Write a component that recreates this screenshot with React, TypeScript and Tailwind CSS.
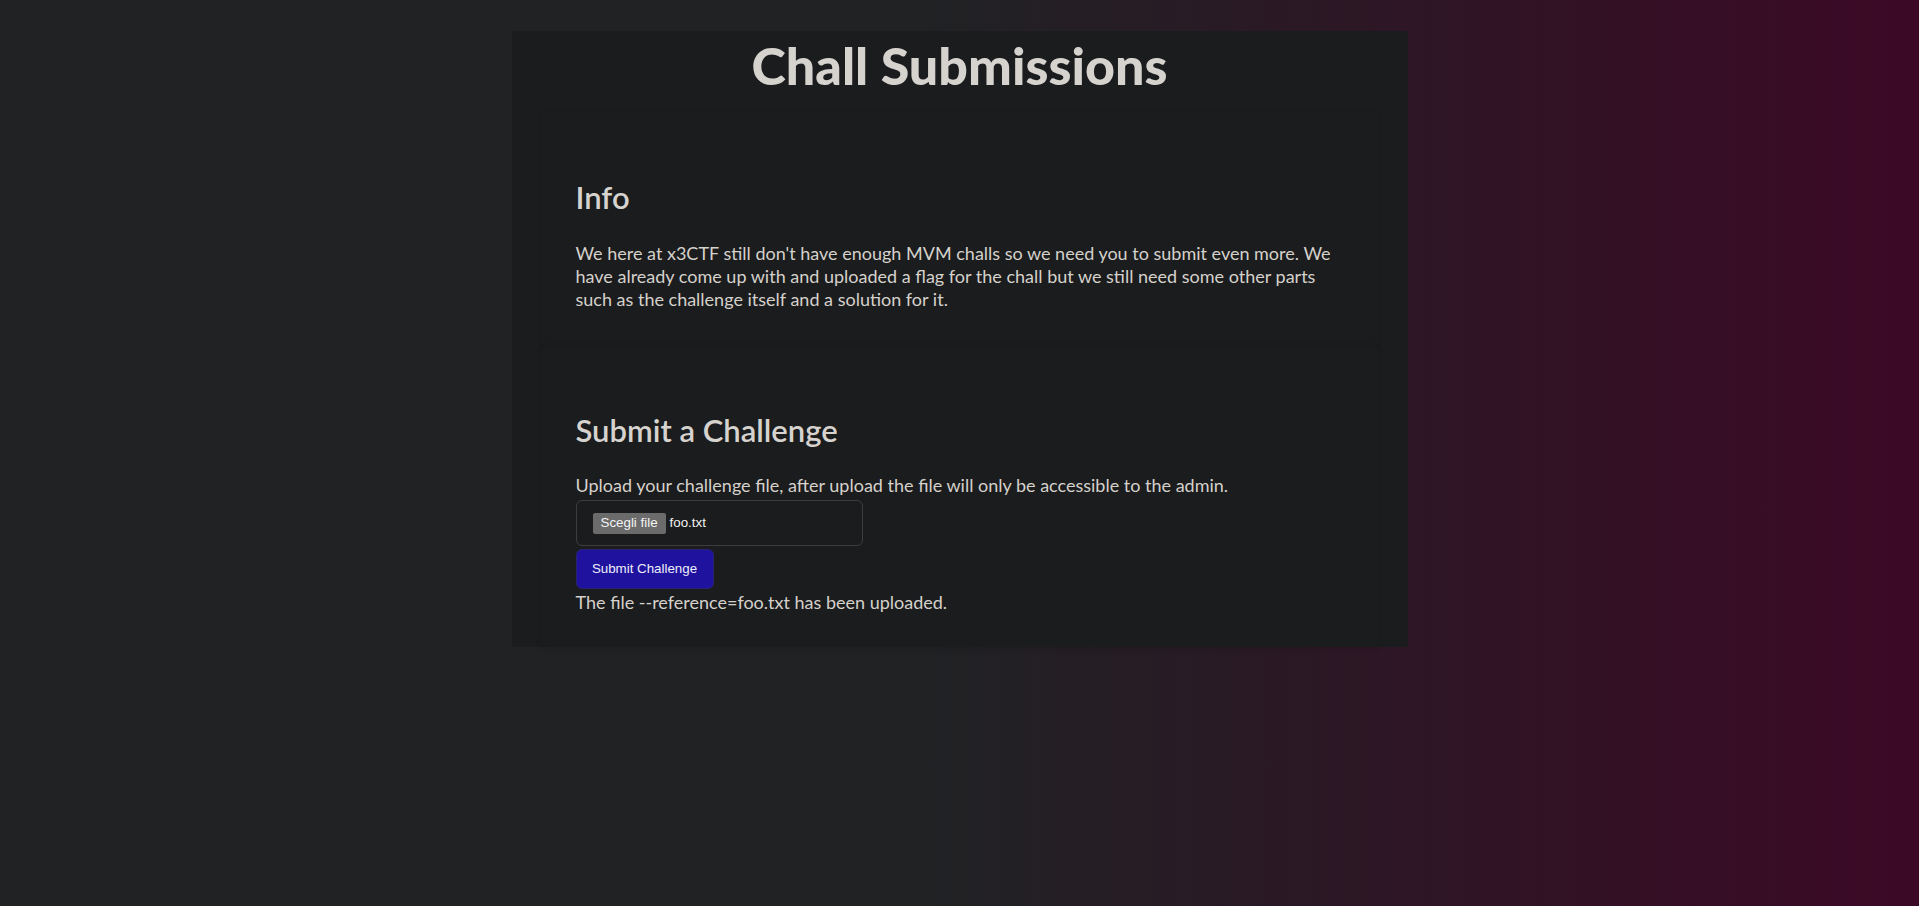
import React from "react";

export default function App() {
  return (
    <div
      className="min-h-screen w-full pt-[31px] bg-[linear-gradient(90deg,#202224_0%,#202224_48%,#3c0926_100%)] text-[#d5d1cb]"
      style={{ fontFamily: '"Lato", "Open Sans", sans-serif' }}
    >
      <main className="mx-auto w-[896px] bg-[#1b1c1e] px-[30px] pt-[3px]">
        <h1 className="m-0 text-center text-[52px] font-black leading-[1.2] text-[#d6d3ce]">
          Chall Submissions
        </h1>

        <section className="mt-[16px] rounded-[6px] bg-[#1b1c1e] px-[34px] pt-[36px] pb-[34px] shadow-[0_2px_6px_rgba(0,0,0,0.12)]">
          <h2 className="mt-[31px] text-[31px] font-semibold leading-[1.2] text-[#d6d3ce]">Info</h2>
          <p className="mt-[25px] text-[18px] leading-[23.4px]">
            We here at x3CTF still don't have enough MVM challs so we need you to submit even more. We
            have already come up with and uploaded a flag for the chall but we still need some other parts
            such as the challenge itself and a solution for it.
          </p>
        </section>

        <section className="rounded-[6px] bg-[#1b1c1e] px-[34px] pt-[35px] pb-[32px] shadow-[0_2px_6px_rgba(0,0,0,0.12)]">
          <h2 className="mt-[31px] text-[31px] font-semibold leading-[1.2] text-[#d6d3ce]">
            Submit a Challenge
          </h2>
          <p className="mt-[25px] text-[18px] leading-[23.4px]">
            Upload your challenge file, after upload the file will only be accessible to the admin.
          </p>
          <div
            className="mt-[3px] flex h-[46px] w-[287px] items-center rounded-[6px] border border-[#3d3d3f] pl-[16px] text-[13.33px] text-[#f2f2f2]"
            style={{ fontFamily: '"Liberation Sans", Arial, sans-serif' }}
          >
            <span className="flex h-[21px] items-center rounded-[2px] bg-[#6b6b6b] px-[8px] text-[#f4f4f4]">
              Scegli file
            </span>
            <span className="ml-[4px]">foo.txt</span>
          </div>
          <button
            className="mt-[3px] flex h-[40px] w-[138px] items-center justify-center rounded-[6px] border border-[#2a2470] bg-[#1e129f] text-[13.33px] text-[#eeeef8]"
            style={{ fontFamily: '"Liberation Sans", Arial, sans-serif' }}
          >
            Submit Challenge
          </button>
          <p className="mt-[2px] text-[18px] leading-[23.4px]">
            The file --reference=foo.txt has been uploaded.
          </p>
        </section>
      </main>
    </div>
  );
}
